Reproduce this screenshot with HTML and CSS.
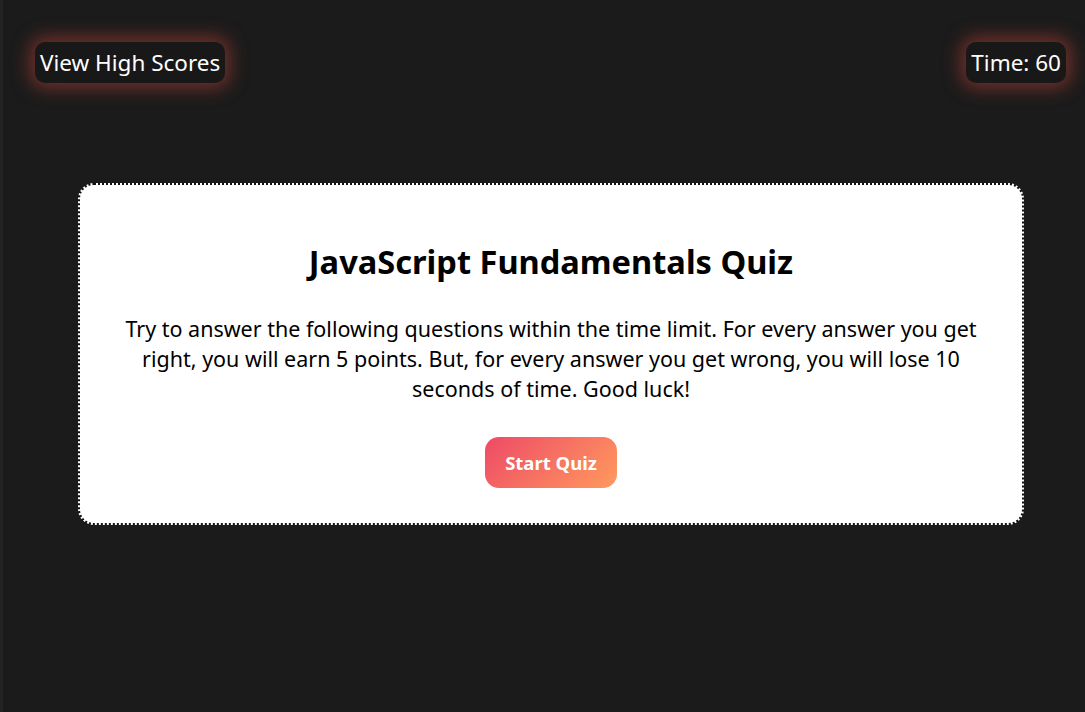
FILE: index.html
```html
<!DOCTYPE html>
<html lang="en">
<head>
<meta charset="utf-8">
<title>JavaScript Fundamentals Quiz</title>
<link rel="stylesheet" href="styles.css">
</head>
<body>
<header class="top-bar">
  <button class="pill">View High Scores</button>
  <div class="pill timer">Time: 60</div>
</header>
<main class="card">
  <h1 class="title">JavaScript Fundamentals Quiz</h1>
  <p class="intro">Try to answer the following questions within the time limit. For every answer you get right, you will earn 5 points. But, for every answer you get wrong, you will lose 10 seconds of time. Good luck!</p>
  <button class="start">Start Quiz</button>
</main>
</body>
</html>
```
FILE: styles.css
```css
html, body {
  margin: 0;
  height: 100%;
}
body {
  background: #1b1b1b;
  border-left: 3px solid #232323;
  box-sizing: border-box;
  font-family: "Noto Sans", "Open Sans", sans-serif;
  color: #fff;
  overflow: hidden;
}
.top-bar {
  display: flex;
  justify-content: space-between;
  align-items: flex-start;
  padding: 42px 19px 0 32px;
}
.pill {
  display: inline-flex;
  align-items: center;
  height: 41px;
  box-sizing: border-box;
  padding: 0 5px;
  background: #181818;
  color: #fff;
  border: none;
  border-radius: 10px;
  font-family: inherit;
  font-size: 22.5px;
  box-shadow: 0 0 18px 5px rgba(150, 58, 50, 0.7);
}
.card {
  margin: 100px 0 0 75px;
  width: 946px;
  height: 342px;
  box-sizing: border-box;
  background: #fff;
  border: 2px dotted #111;
  border-radius: 16px;
  color: #000;
  display: flex;
  flex-direction: column;
  align-items: center;
  padding: 40px 40px 0;
}
.title {
  margin: 17px 0 0;
  font-size: 32.6px;
  font-weight: 700;
  line-height: 40px;
}
.intro {
  margin: 32px 0 0;
  font-size: 21.5px;
  line-height: 30px;
  text-align: center;
}
.start {
  margin-top: 33px;
  width: 132px;
  height: 51px;
  border: none;
  border-radius: 14px;
  background: linear-gradient(135deg, #ee4a66 0%, #ff9a5e 100%);
  color: #fff;
  font-family: inherit;
  font-size: 18.5px;
  font-weight: 700;
}
```
